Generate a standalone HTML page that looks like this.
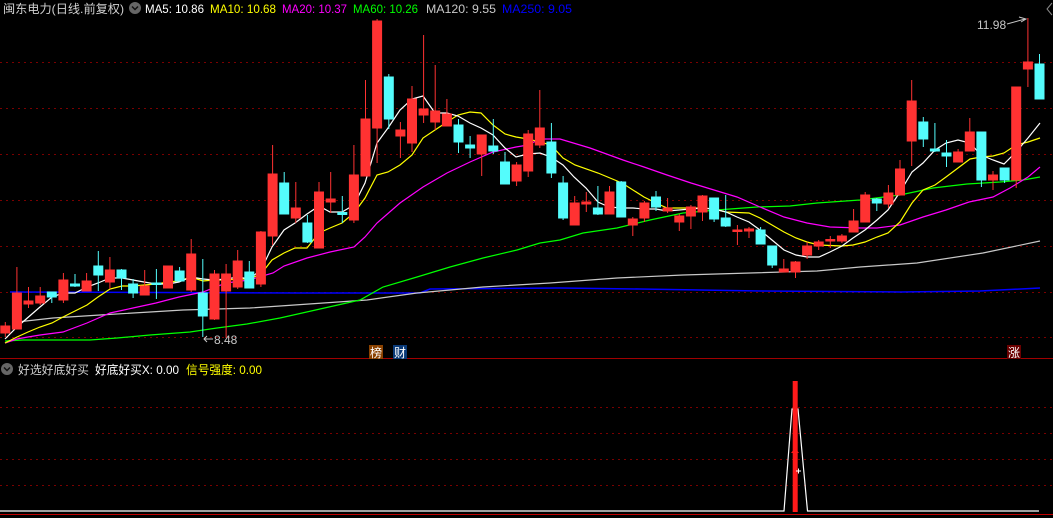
<!DOCTYPE html>
<html><head><meta charset="utf-8"><style>
html,body{margin:0;padding:0;background:#000;width:1053px;height:518px;overflow:hidden}
svg{display:block}
text{font-family:"Liberation Sans","Noto Sans CJK SC",sans-serif;font-size:12px}
</style></head><body>
<svg width="1053" height="518" viewBox="0 0 1053 518" xmlns="http://www.w3.org/2000/svg">
<rect width="1053" height="518" fill="#000"/>
<g stroke="#7a0000" stroke-width="1" stroke-dasharray="2 4">
<line x1="0" x2="1053" y1="62.5" y2="62.5"/><line x1="0" x2="1053" y1="108.5" y2="108.5"/>
<line x1="0" x2="1053" y1="154.5" y2="154.5"/><line x1="0" x2="1053" y1="200.5" y2="200.5"/>
<line x1="0" x2="1053" y1="246.5" y2="246.5"/><line x1="0" x2="1053" y1="292.5" y2="292.5"/>
<line x1="0" x2="1053" y1="337.5" y2="337.5"/>
<line x1="0" x2="1053" y1="407.5" y2="407.5"/><line x1="0" x2="1053" y1="433.5" y2="433.5"/>
<line x1="0" x2="1053" y1="459.5" y2="459.5"/><line x1="0" x2="1053" y1="485.5" y2="485.5"/>
</g>
<line x1="0" x2="1053" y1="358.5" y2="358.5" stroke="#a00000"/>
<line x1="0" x2="1053" y1="514.5" y2="514.5" stroke="#c00000"/>

<g fill="none" stroke-width="1.2">
<polyline stroke="#0000ff" stroke-width="1.5" points="10,292 300,293 420,293 430,289 560,288 640,289 700,290 760,291 900,292 980,291 1040,288"/>
<polyline stroke="#c8c8c8" points="17,322 53,318 100,315 150,312 183,310 217,309 250,308 280,306 367,300 417,293 483,287 550,283 617,278 683,275 750,273 817,271 860,267 917,263 983,253 1040,241"/>
<polyline stroke="#00ff00" points="5,341 23,340 90,340 117,338 150,335 190,332 217,328 247,324 280,318 360,300 383,287 417,277 450,267 483,258 517,250 540,243 560,240 583,233 617,228 650,220 683,213 717,210 757,207 790,206 817,203 860,200 900,195 933,188 967,184 1000,182 1023,180 1040,177"/>
<polyline stroke="#ff00ff" points="5,343 17,339 28,337 40,335 63,332 87,323 110,313 133,308 156,303 179,297 203,292 226,283 249,280 273,273 284,266 307,258 330,252 354,247 365,237 377,223 400,203 423,187 447,173 470,162 493,152 516,147 528,145 540,139 560,139 590,148 623,160 644,167 667,175 691,183 714,190 737,197 760,207 784,217 807,223 830,227 860,228 877,228 900,225 923,217 946,210 969,202 993,197 1010,188 1028,177 1040,167"/>
<polyline stroke="#ffff00" points="5,343 17,337 28,332 40,327 52,323 63,317 75,311 87,305 98,297 110,289 122,286 133,286 144,285 156,284 168,282 179,281 191,277 203,281 214,280 226,280 238,279 249,279 261,274 272,260 284,253 295,248 307,248 319,233 330,228 342,223 354,213 365,198 377,175 388,172 400,165 412,155 423,138 435,130 447,122 458,115 470,112 481,113 493,125 505,134 516,137 528,139 540,142 551,145 563,158 575,165 598,173 622,183 644,197 656,203 667,208 691,208 702,208 714,209 726,212 749,213 760,218 772,225 784,232 796,238 807,242 819,245 842,246 853,245 865,242 877,237 888,233 900,222 912,203 923,190 935,185 946,177 958,168 970,159 981,157 993,156 1004,153 1016,145 1028,142 1040,138"/>
<polyline stroke="#ffffff" points="5,339 17,327 40,307 52,297 63,293 75,293 87,287 98,283 110,278 122,278 133,280 144,282 156,284 168,284 179,282 191,277 203,279 214,280 226,279 238,277 249,279 261,270 272,247 284,230 295,223 307,214 319,206 330,212 342,212 354,205 365,183 377,143 388,128 400,110 412,99 423,96 435,113 447,113 458,116 470,123 481,128 493,135 505,148 516,157 528,154 540,153 551,157 563,165 574,177 586,188 598,202 609,207 622,208 633,208 644,209 656,209 667,211 679,210 691,209 702,208 714,209 726,212 737,217 749,222 760,230 772,240 784,250 796,255 807,257 819,257 830,252 842,246 853,238 865,230 877,220 888,210 900,192 912,172 923,163 935,150 946,143 958,140 970,143 981,155 993,160 1004,164 1016,152 1028,138 1040,123"/>
</g>

<g stroke="#ff3232" fill="#ff3232">
<line x1="5.3" x2="5.3" y1="322" y2="337"/><rect x="0.8" width="9" y="326" height="7"/>
<line x1="16.9" x2="16.9" y1="267" y2="329"/><rect x="12.4" width="9" y="293" height="36"/>
<line x1="28.5" x2="28.5" y1="287" y2="308"/><rect x="24" width="9" y="301" height="3"/>
<line x1="40.2" x2="40.2" y1="287" y2="305"/><rect x="35.7" width="9" y="296" height="7"/>
<line x1="63.4" x2="63.4" y1="273" y2="303"/><rect x="58.9" width="9" y="280" height="20"/>
<line x1="86.6" x2="86.6" y1="273" y2="291"/><rect x="82.1" width="9" y="281" height="10"/>
<line x1="109.9" x2="109.9" y1="257" y2="289"/><rect x="105.4" width="9" y="270" height="12"/>
<line x1="144.7" x2="144.7" y1="270" y2="295"/><rect x="140.2" width="9" y="286" height="9"/>
<line x1="168" x2="168" y1="266" y2="288"/><rect x="163.5" width="9" y="266" height="22"/>
<line x1="191.2" x2="191.2" y1="239" y2="292"/><rect x="186.7" width="9" y="254" height="36"/>
<line x1="214.5" x2="214.5" y1="270" y2="320"/><rect x="210" width="9" y="274" height="45"/>
<line x1="226.1" x2="226.1" y1="264" y2="338"/><rect x="221.6" width="9" y="274" height="17"/>
<line x1="237.7" x2="237.7" y1="250" y2="289"/><rect x="233.2" width="9" y="261" height="26"/>
<line x1="260.9" x2="260.9" y1="231" y2="287"/><rect x="256.4" width="9" y="232" height="52"/>
<line x1="272.6" x2="272.6" y1="145" y2="245"/><rect x="268.1" width="9" y="174" height="62"/>
<line x1="295.8" x2="295.8" y1="182" y2="223"/><rect x="291.3" width="9" y="208" height="10"/>
<line x1="319" x2="319" y1="182" y2="248"/><rect x="314.5" width="9" y="192" height="56"/>
<line x1="330.7" x2="330.7" y1="172" y2="213"/><rect x="326.2" width="9" y="199" height="3"/>
<line x1="353.9" x2="353.9" y1="145" y2="223"/><rect x="349.4" width="9" y="175" height="45"/>
<line x1="365.5" x2="365.5" y1="80" y2="176"/><rect x="361" width="9" y="119" height="57"/>
<line x1="377.1" x2="377.1" y1="19" y2="163"/><rect x="372.6" width="9" y="21" height="107"/>
<line x1="400.4" x2="400.4" y1="122" y2="158"/><rect x="395.9" width="9" y="130" height="6"/>
<line x1="412" x2="412" y1="86" y2="152"/><rect x="407.5" width="9" y="99" height="44"/>
<line x1="423.6" x2="423.6" y1="35" y2="123"/><rect x="419.1" width="9" y="109" height="6"/>
<line x1="435.2" x2="435.2" y1="65" y2="130"/><rect x="430.7" width="9" y="111" height="11"/>
<line x1="446.9" x2="446.9" y1="99" y2="126"/><rect x="442.4" width="9" y="114" height="12"/>
<line x1="481.7" x2="481.7" y1="135" y2="176"/><rect x="477.2" width="9" y="135" height="19"/>
<line x1="516.6" x2="516.6" y1="162" y2="186"/><rect x="512.1" width="9" y="165" height="16"/>
<line x1="528.2" x2="528.2" y1="130" y2="177"/><rect x="523.7" width="9" y="134" height="37"/>
<line x1="539.8" x2="539.8" y1="90" y2="148"/><rect x="535.3" width="9" y="128" height="17"/>
<line x1="574.7" x2="574.7" y1="196" y2="225"/><rect x="570.2" width="9" y="203" height="22"/>
<line x1="586.3" x2="586.3" y1="192" y2="212"/><rect x="581.8" width="9" y="202" height="2"/>
<line x1="609.5" x2="609.5" y1="186" y2="214"/><rect x="605" width="9" y="192" height="22"/>
<line x1="632.8" x2="632.8" y1="217" y2="236"/><rect x="628.3" width="9" y="219" height="6"/>
<line x1="644.4" x2="644.4" y1="201" y2="222"/><rect x="639.9" width="9" y="203" height="15"/>
<line x1="667.6" x2="667.6" y1="198" y2="213"/><rect x="663.1" width="9" y="208" height="3"/>
<line x1="679.3" x2="679.3" y1="214" y2="231"/><rect x="674.8" width="9" y="216" height="6"/>
<line x1="690.9" x2="690.9" y1="205" y2="229"/><rect x="686.4" width="9" y="207" height="9"/>
<line x1="702.5" x2="702.5" y1="195" y2="221"/><rect x="698" width="9" y="196" height="16"/>
<line x1="737.4" x2="737.4" y1="225" y2="245"/><rect x="732.9" width="9" y="230" height="1.5"/>
<line x1="749" x2="749" y1="227" y2="238"/><rect x="744.5" width="9" y="229" height="2"/>
<line x1="783.8" x2="783.8" y1="259" y2="272"/><rect x="779.3" width="9" y="269" height="3"/>
<line x1="795.5" x2="795.5" y1="261" y2="278"/><rect x="791" width="9" y="262" height="10"/>
<line x1="807.1" x2="807.1" y1="242" y2="259"/><rect x="802.6" width="9" y="246" height="9"/>
<line x1="818.7" x2="818.7" y1="240" y2="250"/><rect x="814.2" width="9" y="242" height="4"/>
<line x1="830.3" x2="830.3" y1="236" y2="248"/><rect x="825.8" width="9" y="239.5" height="1.5"/>
<line x1="841.9" x2="841.9" y1="234" y2="243"/><rect x="837.4" width="9" y="236" height="5"/>
<line x1="853.6" x2="853.6" y1="209" y2="232"/><rect x="849.1" width="9" y="221" height="11"/>
<line x1="865.2" x2="865.2" y1="192" y2="222"/><rect x="860.7" width="9" y="195" height="27"/>
<line x1="888.4" x2="888.4" y1="185" y2="208"/><rect x="883.9" width="9" y="193" height="11"/>
<line x1="900" x2="900" y1="160" y2="195"/><rect x="895.5" width="9" y="169" height="26"/>
<line x1="911.7" x2="911.7" y1="80" y2="166"/><rect x="907.2" width="9" y="101" height="40"/>
<line x1="958.1" x2="958.1" y1="149" y2="162"/><rect x="953.6" width="9" y="152" height="10"/>
<line x1="969.8" x2="969.8" y1="118" y2="151"/><rect x="965.3" width="9" y="132" height="19"/>
<line x1="993" x2="993" y1="171" y2="190"/><rect x="988.5" width="9" y="175" height="5"/>
<line x1="1016.2" x2="1016.2" y1="87" y2="188"/><rect x="1011.7" width="9" y="87" height="93"/>
<line x1="1027.9" x2="1027.9" y1="18" y2="87"/><rect x="1023.4" width="9" y="62" height="7"/>
</g>
<g stroke="#54fcfc" fill="#54fcfc">
<line x1="51.8" x2="51.8" y1="292" y2="303"/><rect x="47.3" width="9" y="292" height="5"/>
<line x1="75" x2="75" y1="274" y2="287"/><rect x="70.5" width="9" y="284" height="2"/>
<line x1="98.3" x2="98.3" y1="251" y2="291"/><rect x="93.8" width="9" y="266" height="9"/>
<line x1="121.5" x2="121.5" y1="269" y2="290"/><rect x="117" width="9" y="270" height="8"/>
<line x1="133.1" x2="133.1" y1="279" y2="298"/><rect x="128.6" width="9" y="284" height="9"/>
<line x1="156.4" x2="156.4" y1="269" y2="299"/><rect x="151.9" width="9" y="283" height="1.5"/>
<line x1="179.6" x2="179.6" y1="267" y2="281"/><rect x="175.1" width="9" y="271" height="10"/>
<line x1="202.8" x2="202.8" y1="259" y2="337"/><rect x="198.3" width="9" y="293" height="23"/>
<line x1="249.3" x2="249.3" y1="261" y2="288"/><rect x="244.8" width="9" y="272" height="16"/>
<line x1="284.2" x2="284.2" y1="172" y2="214"/><rect x="279.7" width="9" y="183" height="31"/>
<line x1="307.4" x2="307.4" y1="215" y2="243"/><rect x="302.9" width="9" y="223" height="19"/>
<line x1="342.3" x2="342.3" y1="196" y2="223"/><rect x="337.8" width="9" y="212.5" height="2"/>
<line x1="388.8" x2="388.8" y1="74" y2="129"/><rect x="384.3" width="9" y="77" height="42"/>
<line x1="458.5" x2="458.5" y1="119" y2="153"/><rect x="454" width="9" y="125" height="17"/>
<line x1="470.1" x2="470.1" y1="136" y2="158"/><rect x="465.6" width="9" y="145" height="3"/>
<line x1="493.3" x2="493.3" y1="119" y2="154"/><rect x="488.8" width="9" y="146" height="5"/>
<line x1="505" x2="505" y1="152" y2="184"/><rect x="500.5" width="9" y="162" height="22"/>
<line x1="551.4" x2="551.4" y1="123" y2="178"/><rect x="546.9" width="9" y="142" height="31"/>
<line x1="563.1" x2="563.1" y1="176" y2="220"/><rect x="558.6" width="9" y="183" height="35"/>
<line x1="597.9" x2="597.9" y1="186" y2="215"/><rect x="593.4" width="9" y="208" height="6"/>
<line x1="621.2" x2="621.2" y1="181" y2="217"/><rect x="616.7" width="9" y="182" height="35"/>
<line x1="656" x2="656" y1="191" y2="211"/><rect x="651.5" width="9" y="197" height="10"/>
<line x1="714.1" x2="714.1" y1="198" y2="222"/><rect x="709.6" width="9" y="198" height="21"/>
<line x1="725.7" x2="725.7" y1="195" y2="227"/><rect x="721.2" width="9" y="218" height="8"/>
<line x1="760.6" x2="760.6" y1="227" y2="244"/><rect x="756.1" width="9" y="230" height="14"/>
<line x1="772.2" x2="772.2" y1="246" y2="268"/><rect x="767.7" width="9" y="246" height="19"/>
<line x1="876.8" x2="876.8" y1="198" y2="211"/><rect x="872.3" width="9" y="199" height="4"/>
<line x1="923.3" x2="923.3" y1="117" y2="147"/><rect x="918.8" width="9" y="122" height="17"/>
<line x1="934.9" x2="934.9" y1="123" y2="152"/><rect x="930.4" width="9" y="149" height="2"/>
<line x1="946.5" x2="946.5" y1="140" y2="167"/><rect x="942" width="9" y="153" height="3"/>
<line x1="981.4" x2="981.4" y1="132" y2="187"/><rect x="976.9" width="9" y="132" height="48"/>
<line x1="1004.6" x2="1004.6" y1="168" y2="183"/><rect x="1000.1" width="9" y="168" height="12"/>
<line x1="1039.5" x2="1039.5" y1="54" y2="99"/><rect x="1035" width="9" y="64" height="35"/>
</g>

<text x="977" y="29" fill="#c8c8c8">11.98</text>
<polyline points="1007,24 1025,19" stroke="#c8c8c8" fill="none"/>
<polyline points="1019,17 1026,19 1021,22" stroke="#c8c8c8" fill="none"/>
<text x="214" y="344" fill="#c8c8c8">8.48</text>
<line x1="204" y1="339" x2="213" y2="339" stroke="#c8c8c8"/>
<polyline points="207,336 204,339 207,342" stroke="#c8c8c8" fill="none"/>
<polyline points="1052,3 1047,9 1052,15" stroke="#888" fill="none"/>

<rect x="369" y="345" width="14" height="14" fill="#8b4200"/>
<text x="370" y="357" fill="#fff">榜</text>
<rect x="393" y="345" width="14" height="14" fill="#0a3a78"/>
<text x="394" y="357" fill="#fff">财</text>
<rect x="1007" y="345" width="14" height="14" fill="#6a0000"/>
<text x="1008" y="357" fill="#fff">涨</text>

<text x="3" y="13" fill="#d0d0d0" textLength="121" lengthAdjust="spacingAndGlyphs">闽东电力(日线.前复权)</text>
<circle cx="135" cy="8" r="6" fill="#666"/>
<polyline points="132,6.5 135,9.5 138,6.5" stroke="#111" stroke-width="1.5" fill="none"/>
<text x="145" y="13" fill="#fff" textLength="59" lengthAdjust="spacingAndGlyphs">MA5: 10.86</text>
<text x="210" y="13" fill="#ffff00" textLength="66" lengthAdjust="spacingAndGlyphs">MA10: 10.68</text>
<text x="282" y="13" fill="#ff00ff" textLength="65" lengthAdjust="spacingAndGlyphs">MA20: 10.37</text>
<text x="353" y="13" fill="#00ff00" textLength="65" lengthAdjust="spacingAndGlyphs">MA60: 10.26</text>
<text x="426" y="13" fill="#c8c8c8" textLength="70" lengthAdjust="spacingAndGlyphs">MA120: 9.55</text>
<text x="502" y="13" fill="#0000ff" textLength="70" lengthAdjust="spacingAndGlyphs">MA250: 9.05</text>

<circle cx="7" cy="369" r="6" fill="#666"/>
<polyline points="4,367.5 7,370.5 10,367.5" stroke="#111" stroke-width="1.5" fill="none"/>
<text x="18" y="374" fill="#d0d0d0" textLength="71" lengthAdjust="spacingAndGlyphs">好选好底好买</text>
<text x="95" y="374" fill="#fff" textLength="84" lengthAdjust="spacingAndGlyphs">好底好买X: 0.00</text>
<text x="186" y="374" fill="#ffff00" textLength="76" lengthAdjust="spacingAndGlyphs">信号强度: 0.00</text>

<polyline points="0,511 784,511 792,409 798,409 807.5,511 1039,511" stroke="#fff" stroke-width="1.2" fill="none"/>
<rect x="792.7" y="381" width="5" height="131" fill="#ff1a1a"/>
<polygon points="795,448 791,453 799,453" fill="#ff1a1a"/>
<line x1="796" y1="471" x2="801" y2="471" stroke="#fff"/>
<line x1="798.5" y1="468.5" x2="798.5" y2="473.5" stroke="#fff"/>
</svg>
</body></html>
